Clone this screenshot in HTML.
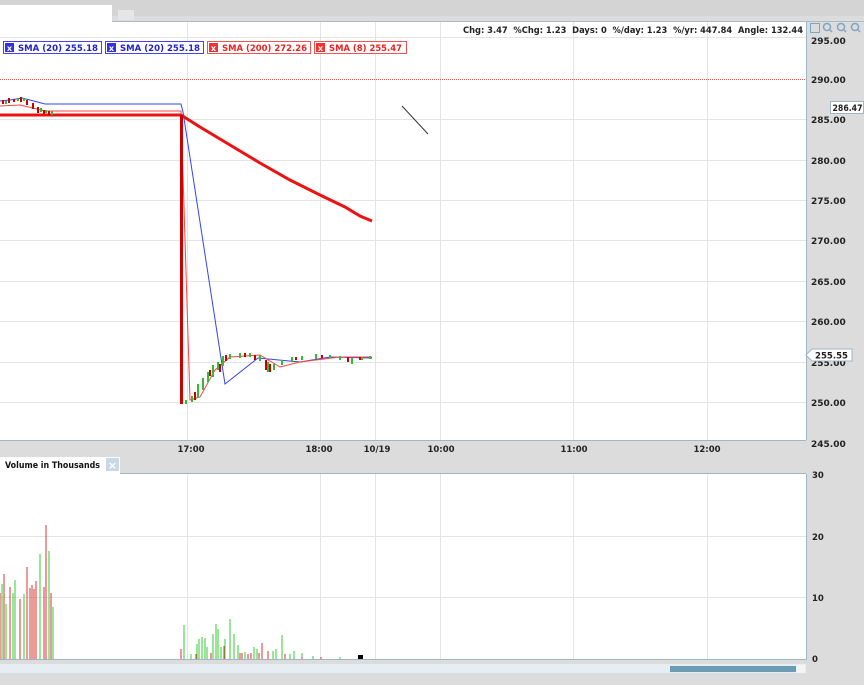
<!DOCTYPE html>
<html><head><meta charset="utf-8"><style>
body{margin:0;width:864px;height:680px;overflow:hidden;background:#dcdcdc;font-family:"Liberation Sans",Verdana,sans-serif;}
</style></head><body>
<svg width="864" height="680" xmlns="http://www.w3.org/2000/svg" font-family="Verdana, 'DejaVu Sans', sans-serif" font-weight="bold" font-size="9">
<rect x="0" y="0" width="864" height="680" fill="#dcdcdc"/>
<rect x="0" y="0" width="864" height="16" fill="#d4d4d4"/>
<rect x="0" y="5" width="112" height="17" fill="#ffffff"/>
<rect x="118" y="10" width="16" height="10" fill="#e6e6e6"/>
<line x1="112" y1="21.5" x2="864" y2="21.5" stroke="#a9bccc"/>
<rect x="0" y="22" width="806" height="418" fill="#fff"/>
<rect x="806" y="22" width="58" height="418" fill="#dcdcdc"/>
<line x1="806.5" y1="22" x2="806.5" y2="440" stroke="#9fb6c8"/>
<line x1="0" y1="440.5" x2="806" y2="440.5" stroke="#9fb6c8"/>
<g stroke="#e4e4e4" stroke-width="1">
<line x1="0" y1="37.5" x2="806" y2="37.5"/><line x1="0" y1="119.5" x2="806" y2="119.5"/>
<line x1="0" y1="160.5" x2="806" y2="160.5"/><line x1="0" y1="200.5" x2="806" y2="200.5"/><line x1="0" y1="240.5" x2="806" y2="240.5"/>
<line x1="0" y1="281.5" x2="806" y2="281.5"/><line x1="0" y1="321.5" x2="806" y2="321.5"/><line x1="0" y1="362.5" x2="806" y2="362.5"/><line x1="0" y1="402.5" x2="806" y2="402.5"/>
<line x1="187.5" y1="22" x2="187.5" y2="440"/><line x1="320.5" y1="22" x2="320.5" y2="440"/><line x1="375.5" y1="22" x2="375.5" y2="440"/>
<line x1="440.5" y1="22" x2="440.5" y2="440"/><line x1="573.5" y1="22" x2="573.5" y2="440"/><line x1="707.5" y1="22" x2="707.5" y2="440"/>
</g>
<line x1="0" y1="79.5" x2="806" y2="79.5" stroke="#ee5555" stroke-dasharray="1,1"/>
<text x="463" y="33" font-size="8.5" fill="#222" xml:space="preserve" textLength="340" lengthAdjust="spacingAndGlyphs">Chg: 3.47  %Chg: 1.23  Days: 0  %/day: 1.23  %/yr: 447.84  Angle: 132.44</text>
<g font-size="8.5">
<rect x="3.5" y="41.5" width="98" height="12" fill="#fff" stroke="#4444ee"/><rect x="5" y="43" width="9" height="9" fill="#3333dd"/><text x="9.5" y="51" fill="#fff" text-anchor="middle" font-size="8">x</text><text x="18" y="51" fill="#2222cc" textLength="80" lengthAdjust="spacingAndGlyphs">SMA (20) 255.18</text>
<rect x="105.5" y="41.5" width="98" height="12" fill="#fff" stroke="#4444ee"/><rect x="107" y="43" width="9" height="9" fill="#3333dd"/><text x="111.5" y="51" fill="#fff" text-anchor="middle" font-size="8">x</text><text x="120" y="51" fill="#2222cc" textLength="80" lengthAdjust="spacingAndGlyphs">SMA (20) 255.18</text>
<rect x="207.5" y="41.5" width="103" height="12" fill="#fff" stroke="#ee5555"/><rect x="209" y="43" width="9" height="9" fill="#ee3333"/><text x="213.5" y="51" fill="#fff" text-anchor="middle" font-size="8">x</text><text x="222" y="51" fill="#ee2222" textLength="85" lengthAdjust="spacingAndGlyphs">SMA (200) 272.26</text>
<rect x="314.5" y="41.5" width="92" height="12" fill="#fff" stroke="#ee5555"/><rect x="316" y="43" width="9" height="9" fill="#ee3333"/><text x="320.5" y="51" fill="#fff" text-anchor="middle" font-size="8">x</text><text x="329" y="51" fill="#ee2222" textLength="73" lengthAdjust="spacingAndGlyphs">SMA (8) 255.47</text>
</g>
<rect x="810.5" y="23.5" width="9" height="9" fill="none" stroke="#7fa5c0"/>
<g fill="none" stroke="#7fa5c0" stroke-width="1.5"><circle cx="827" cy="27" r="3.5"/><line x1="829.5" y1="29.5" x2="832" y2="32"/><circle cx="841" cy="27" r="3.5"/><line x1="843.5" y1="29.5" x2="846" y2="32"/><circle cx="855" cy="27" r="3.5"/><line x1="857.5" y1="29.5" x2="860" y2="32"/></g>
<g font-size="9" fill="#222">
<text x="811" y="44">295.00</text><text x="811" y="83">290.00</text><text x="811" y="123">285.00</text><text x="811" y="164">280.00</text>
<text x="811" y="204">275.00</text><text x="811" y="244">270.00</text><text x="811" y="285">265.00</text><text x="811" y="325">260.00</text>
<text x="811" y="366">255.00</text><text x="811" y="406">250.00</text><text x="811" y="447">245.00</text>
</g>
<rect x="830.5" y="101.5" width="33" height="12" fill="#fff" stroke="#9fb6c8"/><text x="832.5" y="111" font-size="8.5" fill="#222" textLength="30" lengthAdjust="spacingAndGlyphs">286.47</text>
<polygon points="806,355 812,349 852,349 852,361 812,361" fill="#fff" stroke="#9fb6c8"/><text x="815" y="358.5" font-size="8.5" fill="#222" textLength="33" lengthAdjust="spacingAndGlyphs">255.55</text>
<g font-size="8.5" fill="#222" text-anchor="middle">
<text x="191" y="452">17:00</text><text x="319" y="452">18:00</text><text x="377" y="452">10/19</text><text x="441" y="452">10:00</text><text x="574" y="452">11:00</text><text x="707" y="452">12:00</text>
</g>
<line x1="402" y1="106" x2="428" y2="134" stroke="#333" stroke-width="1"/>
<polyline points="0,101 10,100 22,98 30,100 45,104 181,104 183,112 225,384 258,358 300,362 330,357 372,358" fill="none" stroke="#3344ee" stroke-width="1"/>
<polyline points="0,106 20,105 45,111 181,111 190,400 200,397 215,370 230,357 260,355 280,367 300,362 340,357 372,357" fill="none" stroke="#ff4444" stroke-width="1"/>
<polyline points="0,115 181,115 200,127 230,145 260,163 290,180 320,195 345,207 360,216 372,221" fill="none" stroke="#ee1111" stroke-width="3"/>
<line x1="181.5" y1="115" x2="181.5" y2="404" stroke="#cc0000" stroke-width="3"/>
<g stroke-width="2">
<path d="M3 100v4M9 98v5M14 99v3M21 97v5M27 100v5M33 103v6M38 107v6M44 110v4M49 111v4" stroke="#cc0000"/>
<path d="M6 101v3M18 98v3M24 98v3M41 108v4M46 110v3M52 111v4" stroke="#33bb33"/>
<path d="M186 400v4M192 396v6M198 384v14M203 378v12M208 372v10M213 365v12M218 362v8M223 356v10M230 354v5M240 353v5M250 353v4M260 355v6M268 362v10M274 364v6M282 360v5M292 357v5M302 356v4M316 354v5M330 355v3M340 356v4M352 358v6M362 357v3M370 356v3" stroke="#33bb33"/>
<path d="M195 392v8M210 370v6M220 364v8M226 355v6M245 353v4M255 355v5M266 360v10M270 364v8M296 357v3M322 355v3M348 357v5M360 357v3" stroke="#cc0000"/>
</g>
<rect x="0" y="457" width="120" height="17" fill="#fff"/>
<text x="5" y="468" font-size="8.5" fill="#111" textLength="95" lengthAdjust="spacingAndGlyphs">Volume in Thousands</text>
<rect x="106" y="458" width="13" height="13" fill="#c8d8e4"/><text x="112.5" y="469" font-size="11" fill="#fff" text-anchor="middle">×</text>
<line x1="120" y1="473.5" x2="806" y2="473.5" stroke="#9fb6c8"/>
<rect x="0" y="474" width="806" height="186" fill="#fff"/>
<line x1="806.5" y1="474" x2="806.5" y2="660" stroke="#9fb6c8"/>
<line x1="0" y1="659.5" x2="806" y2="659.5" stroke="#9fb6c8"/>
<g stroke="#e4e4e4"><line x1="0" y1="536.5" x2="806" y2="536.5"/><line x1="0" y1="597.5" x2="806" y2="597.5"/>
<line x1="187.5" y1="474" x2="187.5" y2="659"/><line x1="320.5" y1="474" x2="320.5" y2="659"/><line x1="375.5" y1="474" x2="375.5" y2="659"/><line x1="440.5" y1="474" x2="440.5" y2="659"/><line x1="573.5" y1="474" x2="573.5" y2="659"/><line x1="707.5" y1="474" x2="707.5" y2="659"/></g>
<g font-size="8.5" fill="#222"><text x="812" y="478">30</text><text x="812" y="540">20</text><text x="812" y="601">10</text><text x="812" y="662">0</text></g>
<g stroke-width="1">
<path d="M0 659v-66M4 659v-85M10 659v-72M20 659v-60M27 659v-92M30 659v-71M32 659v-74M34 659v-70M36 659v-78M44 659v-72M46 659v-134M51 659v-66" stroke="#dd3333"/>
<path d="M2 659v-75M6 659v-55M13 659v-66M15 659v-79M24 659v-65M40 659v-105M49 659v-108M53 659v-52" stroke="#33cc33"/>
<path d="M184 659v-34M191 659v-5M197 659v-15M199 659v-20M202 659v-22M205 659v-21M207 659v-12M213 659v-25M216 659v-35M218 659v-30M221 659v-12M225 659v-20M230 659v-40M234 659v-25M238 659v-14M245 659v-7M254 659v-12M257 659v-10M273 659v-8M276 659v-10M282 659v-24M290 659v-5M294 659v-8M302 659v-6M313 659v-3M340 659v-2" stroke="#33cc33"/>
<path d="M181 659v-10M196 659v-5M211 659v-6M224 659v-13M240 659v-6M242 659v-6M248 659v-5M251 659v-6M259 659v-6M262 659v-16M268 659v-8M285 659v-5M302 659v-2M321 659v-2" stroke="#dd3333"/>
</g>
<rect x="358" y="655" width="5" height="4" fill="#000"/>
<rect x="0" y="664" width="806" height="9" fill="#e6eef4"/>
<rect x="670" y="666" width="126" height="6" fill="#6e9bb4"/>
<rect x="797" y="665" width="8" height="8" fill="#f4f4f4"/>
</svg>
</body></html>
